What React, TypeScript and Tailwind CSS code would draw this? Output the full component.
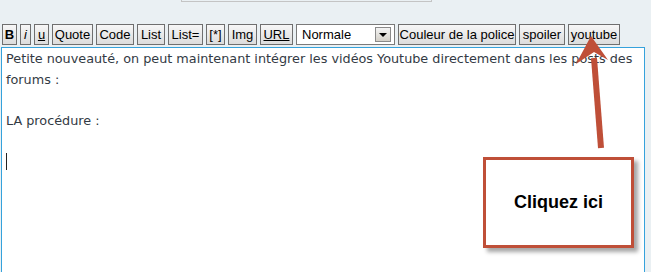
import React from "react";

const Btn = ({ children, w, className = "" }: { children: React.ReactNode; w: number; className?: string }) => (
  <div
    className={`h-[21px] flex items-center justify-center border border-[#6f6f6f] bg-gradient-to-b from-[#f7f7f7] to-[#dcdcdc] text-[13px] text-black leading-none shrink-0 whitespace-nowrap overflow-hidden ${className}`}
    style={{ width: w }}
  >
    {children}
  </div>
);

export default function App() {
  return (
    <div className="relative w-[651px] h-[272px] overflow-hidden bg-[#eaf0f3] font-['Liberation_Sans',Arial,sans-serif]">
      <div className="ml-[181px] w-[251px] h-[2px] border-x border-b border-[#c4c4c4] bg-[#eaf0f3]" />
      <div className="mt-[22px] ml-[2px] flex items-center gap-[3px]">
        <Btn w={15} className="font-bold">B</Btn>
        <Btn w={11} className="italic">i</Btn>
        <Btn w={15} className="underline">u</Btn>
        <Btn w={41}>Quote</Btn>
        <Btn w={38}>Code</Btn>
        <Btn w={28}>List</Btn>
        <Btn w={35}>List=</Btn>
        <Btn w={19}>[*]</Btn>
        <Btn w={29}>Img</Btn>
        <Btn w={33} className="underline">URL</Btn>
        <div className="h-[21px] w-[99px] shrink-0 flex items-center justify-between border border-[#7a7a7a] bg-white pl-[5px] pr-[3px] text-[13px] text-black">
          <span>Normale</span>
          <div className="w-[16px] h-[15px] border border-[#8a8a8a] bg-gradient-to-b from-[#f4f4f4] to-[#d4d0c8] flex items-center justify-center">
            <div className="w-0 h-0 border-l-[4px] border-r-[4px] border-t-[4px] border-l-transparent border-r-transparent border-t-black" />
          </div>
        </div>
        <Btn w={118}>Couleur de la police</Btn>
        <Btn w={46}>spoiler</Btn>
        <Btn w={52}>youtube</Btn>
      </div>
      <div className="mt-[2px] ml-[1px] w-[644px] h-[240px] border border-[#35a2dc] bg-white px-[4px] pt-[1px] text-[12.8px] leading-[20.5px] text-[#333a44] font-['DejaVu_Sans',Verdana,sans-serif]">
        <p>Petite nouveauté, on peut maintenant intégrer les vidéos Youtube directement dans les posts des forums :</p>
        <p>&nbsp;</p>
        <p>LA procédure :</p>
        <p>&nbsp;</p>
        <p className="flex items-center h-[20.5px]"><span className="inline-block w-[1px] h-[17px] bg-[#222]" /></p>
      </div>

      <div className="absolute left-[483px] top-[157px] w-[151px] h-[91px] border-[3px] border-[#bf4f38] bg-white shadow-[4px_4px_4px_rgba(0,0,0,0.35)] flex items-center justify-center">
        <span className="text-[18px] font-bold text-black font-['Liberation_Sans',Arial,sans-serif]">Cliquez ici</span>
      </div>

      <svg className="absolute left-0 top-0" width="651" height="272" viewBox="0 0 651 272">
        <line x1="601" y1="148" x2="594" y2="58" stroke="#bf4f38" strokeWidth="6" />
        <polygon points="591,36 576,64 594,52 608,60" fill="#bf4f38" />
      </svg>
    </div>
  );
}
